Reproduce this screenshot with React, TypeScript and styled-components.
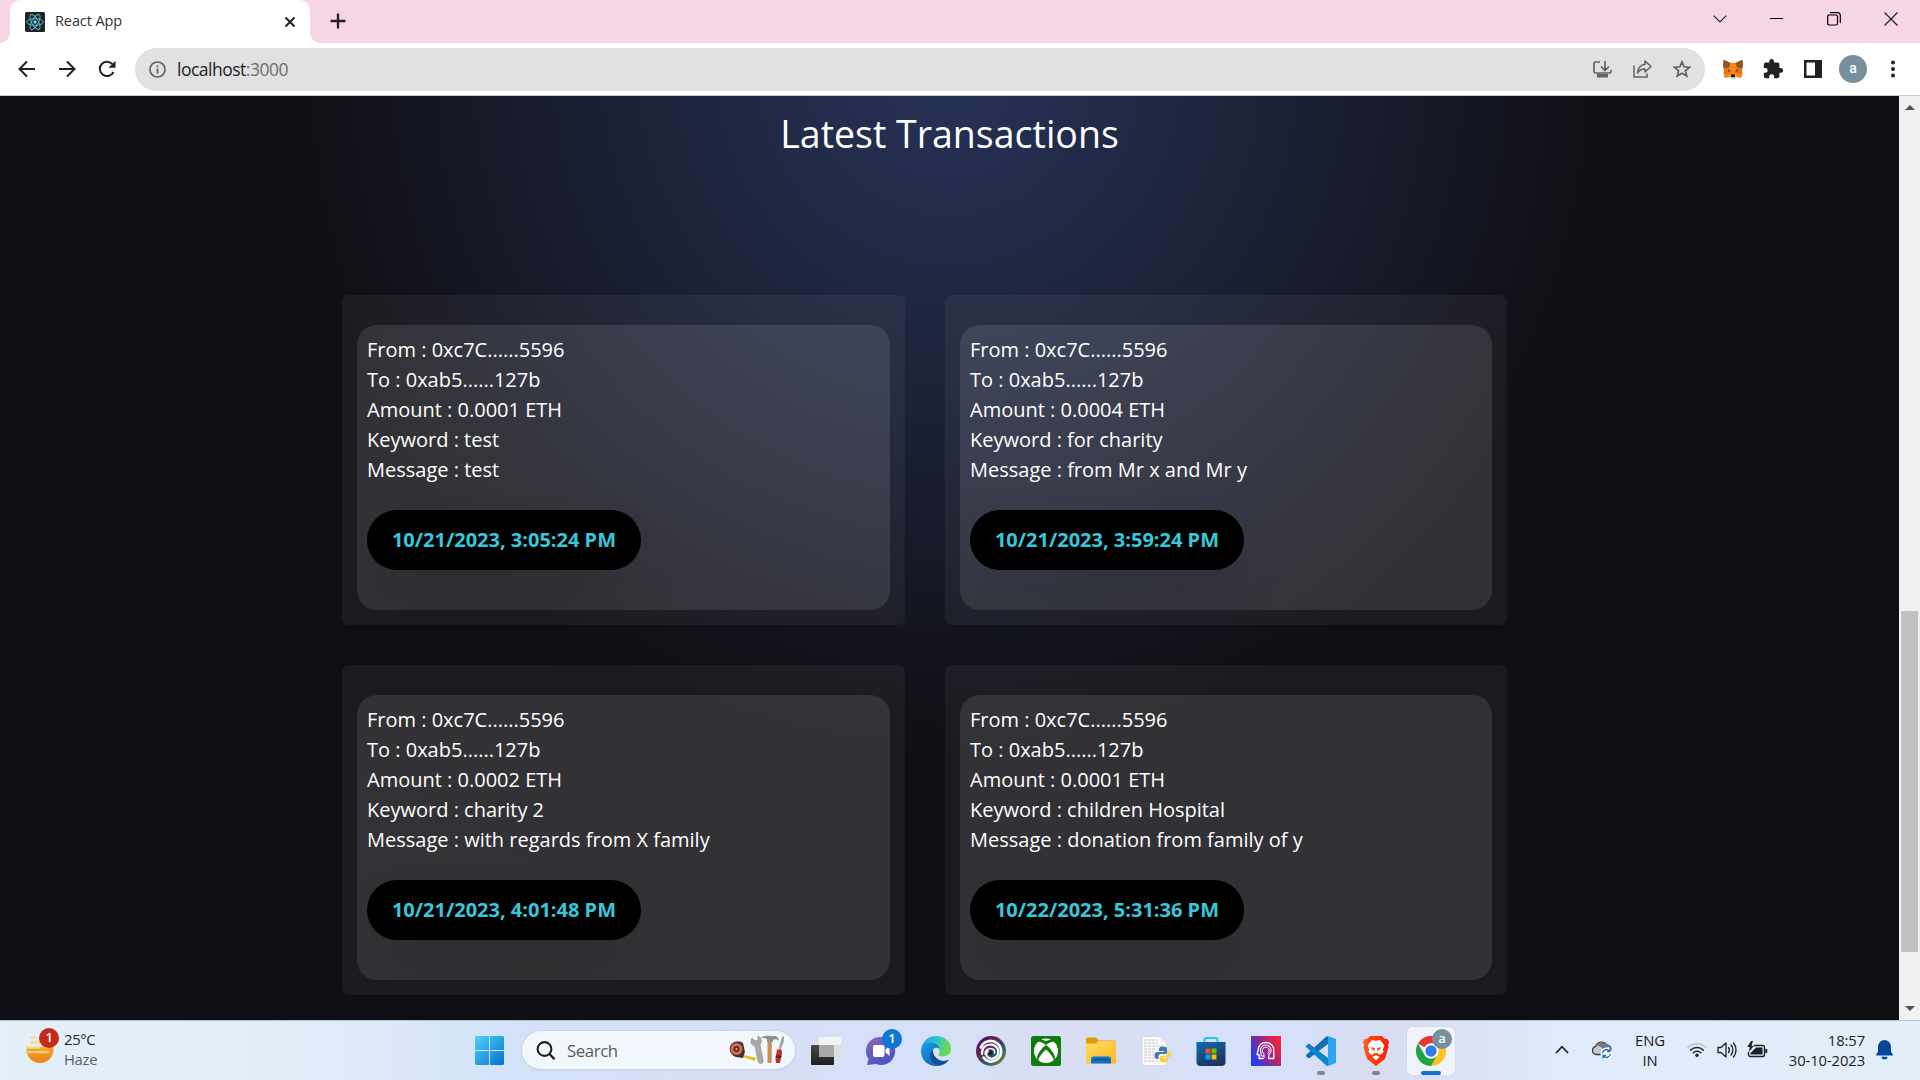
import React from "react";
import styled, { createGlobalStyle } from "styled-components";

const GlobalStyle = createGlobalStyle`
  * { box-sizing: border-box; }
  html, body { margin: 0; padding: 0; overflow: hidden; }
  p, h1 { margin: 0; }
  svg { display: block; flex: none; }
`;

const uiFont = `"Open Sans", "Noto Sans", sans-serif`;

const Screen = styled.div`
  width: 1920px;
  height: 1080px;
  display: flex;
  flex-direction: column;
  overflow: hidden;
  font-family: ${uiFont};
`;

/* ---------- browser chrome ---------- */

const TabStrip = styled.header`
  height: 43px;
  flex: none;
  display: flex;
  background: #f6d5e4;
  padding-left: 10px;
`;

const Tab = styled.div`
  position: relative;
  width: 300px;
  height: 43px;
  display: flex;
  align-items: center;
  padding: 0 14px 0 15px;
  background: #fff;
  border-radius: 10px 10px 0 0;

  &::before,
  &::after {
    content: "";
    position: absolute;
    bottom: 0;
    width: 10px;
    height: 10px;
  }
  &::before {
    left: -10px;
    background: radial-gradient(circle at 0 0, transparent 9.5px, #fff 10px);
  }
  &::after {
    right: -10px;
    background: radial-gradient(circle at 100% 0, transparent 9.5px, #fff 10px);
  }
`;

const TabTitle = styled.span`
  flex: 1;
  padding: 0 0 2px 10px;
  font-size: 14.5px;
  letter-spacing: -0.1px;
  line-height: 20px;
  color: #303236;
`;

const NewTab = styled.div`
  display: flex;
  align-items: center;
  padding: 0 0 2px 20px;
`;

const WindowControls = styled.div`
  margin-left: auto;
  display: flex;
  height: 37px;
  padding-right: 1px;
`;

const ControlSlot = styled.div<{ $w: number }>`
  width: ${(p) => p.$w}px;
  display: flex;
  align-items: center;
  justify-content: center;
`;

const Toolbar = styled.nav`
  height: 53px;
  flex: none;
  display: flex;
  align-items: center;
  background: #fff;
  border-bottom: 1px solid #c9cacc;
  padding: 0 13px 0 7px;
`;

const ToolSlot = styled.div<{ $w?: number }>`
  width: ${(p) => p.$w ?? 40}px;
  height: 40px;
  flex: none;
  display: flex;
  align-items: center;
  justify-content: center;
`;

const Omnibox = styled.div`
  width: 1570px;
  height: 43px;
  flex: none;
  display: flex;
  align-items: center;
  margin: 0 8px 0 8px;
  padding: 0 3px 0 14px;
  border-radius: 22px;
  background: #e1e1e1;
`;

const Url = styled.span`
  flex: 1;
  padding-left: 11px;
  font-size: 17.5px;
  letter-spacing: -0.5px;
  line-height: 24px;
  color: #202124;

  span {
    color: #6b6e72;
  }
`;

const Avatar = styled.div`
  width: 28px;
  height: 28px;
  border-radius: 50%;
  background: #78909c;
  color: #fff;
  font: 500 14px/27px Roboto, sans-serif;
  text-align: center;
`;

/* ---------- page ---------- */

const Viewport = styled.div`
  height: 924px;
  flex: none;
  display: flex;
  background: #0f0e13;
`;

const Page = styled.main`
  flex: 1;
  display: flex;
  flex-direction: column;
  align-items: center;
  padding-top: 10px;
  background-color: #0f0e13;
  background-image: radial-gradient(at 0% 100%, hsla(253, 16%, 7%, 1) 0, transparent 50%),
    radial-gradient(at 50% 0%, hsla(225, 39%, 25%, 1) 0, transparent 50%);
  background-size: 100% 980px;
  background-position: 0 -30px;
  background-repeat: no-repeat;
`;

const Heading = styled.h1`
  height: 56px;
  font-size: 37.5px;
  line-height: 56px;
  font-weight: 400;
  color: #fff;
`;

const CardGrid = styled.section`
  display: grid;
  grid-template-columns: 563px 562px;
  gap: 40px;
  margin: 133px 50px 0 0;
`;

const Card = styled.article`
  height: 330px;
  padding: 30px 15px 15px;
  border-radius: 7px;
  background: rgba(255, 255, 255, 0.05);
`;

const Glass = styled.div`
  height: 285px;
  padding: 10px;
  border-radius: 20px;
  background: rgba(255, 255, 255, 0.1);
  overflow: hidden;
`;

const Line = styled.p`
  font-size: 20px;
  line-height: 30px;
  color: #fff;
  white-space: nowrap;
`;

const Stamp = styled.div`
  width: 274px;
  height: 60px;
  margin-top: 25px;
  border-radius: 30px;
  background: #000;
  box-shadow: 0 31px 62px -15px rgba(0, 0, 0, 0.2);
  color: #37c7da;
  font-size: 20px;
  font-weight: 700;
  line-height: 60px;
  text-align: center;
  white-space: nowrap;
`;

const Scrollbar = styled.div`
  width: 21px;
  display: flex;
  flex-direction: column;
  align-items: center;
  background: #f1f1f1;
  padding: 9px 0 9px;
`;

const Thumb = styled.div`
  width: 17px;
  height: 341px;
  margin-top: 501px;
  margin-bottom: auto;
  background: #c1c1c1;
`;

/* ---------- taskbar ---------- */

const Taskbar = styled.footer`
  height: 60px;
  flex: none;
  display: flex;
  align-items: center;
  border-top: 1px solid #b9c0cc;
  background: linear-gradient(
    90deg,
    #e4eff8 0,
    #e0edf9 300px,
    #d3e2f9 520px,
    #d7def5 760px,
    #d5e1f9 900px,
    #d9def2 1080px,
    #d5e1fa 1250px,
    #d9ddf1 1400px,
    #dfeafa 1560px,
    #e2eef9 1920px
  );
`;

const Weather = styled.div`
  position: relative;
  width: 462px;
  height: 59px;
  padding: 8px 0 0 64px;
  font-size: 14.8px;
  line-height: 20px;
  letter-spacing: -0.3px;
  color: #23262a;

  p + p {
    color: #5b6068;
  }
  > svg {
    position: absolute;
    left: 24px;
    top: 14px;
  }
`;

const Badge = styled.span<{ $x: number; $y: number; $c: string; $s?: number }>`
  position: absolute;
  left: ${(p) => p.$x}px;
  top: ${(p) => p.$y}px;
  width: ${(p) => p.$s ?? 20}px;
  height: ${(p) => p.$s ?? 20}px;
  border-radius: 50%;
  background: ${(p) => p.$c};
  color: #fff;
  font: 600 13px/19px "Open Sans", sans-serif;
  text-align: center;
`;

const AppSlot = styled.div<{ $w?: number }>`
  position: relative;
  width: ${(p) => p.$w ?? 55}px;
  height: 59px;
  flex: none;
  display: flex;
  align-items: center;
  justify-content: center;
`;

const ActiveTile = styled.div`
  width: 48px;
  height: 48px;
  display: flex;
  align-items: center;
  justify-content: center;
  border-radius: 5px;
  background: rgba(255, 255, 255, 0.6);
  box-shadow: 0 0 1px rgba(90, 100, 130, 0.4);
`;

const Indicator = styled.i<{ $active?: boolean }>`
  position: absolute;
  bottom: 5px;
  left: 50%;
  width: ${(p) => (p.$active ? 20 : 8)}px;
  height: 4px;
  transform: translateX(-50%);
  border-radius: 2px;
  background: ${(p) => (p.$active ? "#0a74d0" : "#83868e")};
`;

const SearchBox = styled.div`
  width: 273px;
  height: 38px;
  flex: none;
  display: flex;
  align-items: center;
  margin: 0 3px 1px 5px;
  padding: 0 10px 0 14px;
  border-radius: 20px;
  background: #f2f6fd;
  box-shadow: 0 0 0 1px #cbd3e6, 0 1px 1px #9ba6ba;
  font-size: 16.8px;
  letter-spacing: -0.4px;
  color: #555a61;

  span {
    flex: 1;
    padding-left: 12px;
  }
`;

const Tray = styled.div`
  margin-left: auto;
  display: flex;
  align-items: center;
  height: 59px;
  padding: 0 17px 2px 0;
  font-size: 14.8px;
  line-height: 20px;
  letter-spacing: -0.1px;
  color: #1d2025;
`;

const TrayText = styled.div<{ $w: number; $align: string }>`
  width: ${(p) => p.$w}px;
  text-align: ${(p) => p.$align};
  white-space: nowrap;
`;

/* ---------- icons ---------- */

const ReactLogo = () => (
  <svg width="20" height="20" viewBox="0 0 20 20">
    <rect width="20" height="20" rx="1.5" fill="#222" />
    <g fill="none" stroke="#55c3de" strokeWidth="0.9">
      <ellipse cx="10" cy="10" rx="8.4" ry="3.3" />
      <ellipse cx="10" cy="10" rx="8.4" ry="3.3" transform="rotate(60 10 10)" />
      <ellipse cx="10" cy="10" rx="8.4" ry="3.3" transform="rotate(120 10 10)" />
    </g>
    <circle cx="10" cy="10" r="1.7" fill="#61dafb" />
  </svg>
);

const Stroke = ({ d, w, h = w, c = "#202124", sw = 2, cap = "butt" }: { d: string; w: number; h?: number; c?: string; sw?: number; cap?: "butt" | "round" }) => (
  <svg width={w} height={h} viewBox={`0 0 ${w} ${h}`} fill="none" stroke={c} strokeWidth={sw} strokeLinecap={cap} strokeLinejoin={cap === "round" ? "round" : "miter"}>
    <path d={d} />
  </svg>
);

const Fox = () => (
  <svg width="20" height="20" viewBox="0 0 20 20">
    <path d="M.6.8 7.6 4h4.8l7-3.2L20 8l-1 4 .6 3-1.4 4-4.4-1-2 1.6H8.200L6.200 18l-4.400 1L.4 15l.6-3-1-4z" fill="#f6851b" />
    <path d="M.6.8 7.600 4 6 8.500 1 9.200 0 6zM19.400.8 12.400 4 14 8.500l5 .7 1-3.200z" fill="#8d5528" />
    <path d="M1 10l5-1.500 2 4L6.500 15 1 14.500zM19 10l-5-1.500-2 4 1.500 2.500 5.500-.500z" fill="#e8740f" />
    <path d="M4.700 10.800l2.800 1.300-1.900.7zM15.300 10.800l-2.800 1.300 1.900.7z" fill="#233447" />
    <path d="M6 16.500h8l-2.200 3H8.200z" fill="#d7c1b3" />
    <path d="M8.300 15.600h3.400l.4 2.400H7.900z" fill="#161616" />
  </svg>
);

const Puzzle = () => (
  <svg width="22" height="22" viewBox="0 0 24 24" fill="#202124">
    <path d="M20.500 11H19V7a2 2 0 0 0-2-2h-4V3.500a2.500 2.500 0 0 0-5 0V5H4a2 2 0 0 0-2 2v3.800h1.500a2.700 2.700 0 0 1 0 5.400H2V20a2 2 0 0 0 2 2h3.800v-1.500a2.700 2.700 0 0 1 5.400 0V22H17a2 2 0 0 0 2-2v-4h1.500a2.500 2.500 0 0 0 0-5z" />
  </svg>
);

const WeatherIcon = () => (
  <svg width="32" height="32" viewBox="0 0 32 32">
    <defs>
      <linearGradient id="sun" x1="0" y1="0" x2="0" y2="1">
        <stop offset="0" stopColor="#fbc02d" />
        <stop offset="1" stopColor="#f07f13" />
      </linearGradient>
    </defs>
    <circle cx="16" cy="14.500" r="13.500" fill="url(#sun)" />
    <path d="M0 0h18v12H0z" fill="#e4eff8" />
    <g stroke="#f6dc8b" strokeWidth="2.600" strokeLinecap="round">
      <path d="M7.500 2.500h4M7.500 7.500h13M2.500 12.500h12" />
      <path d="M3 17h21" stroke="#e8cf84" />
      <path d="M19 12.500h5" stroke="#f3b43a" />
    </g>
  </svg>
);

const StartLogo = () => (
  <svg width="29" height="29" viewBox="0 0 29 29">
    <defs>
      <linearGradient id="win" x1="0" y1="0" x2="1" y2="1">
        <stop offset="0" stopColor="#4fd2fb" />
        <stop offset="1" stopColor="#0570cf" />
      </linearGradient>
    </defs>
    <path d="M1 0h13v14H0V1zM15 0h13l1 1v13H15zM0 15h14v14H1l-1-1zM15 15h14v13l-1 1H15z" fill="url(#win)" />
  </svg>
);

const Tools = () => (
  <svg width="56" height="30" viewBox="0 0 56 30">
    <path d="M15 20l12 3-1 3-12-4z" fill="#e3c11c" />
    <path d="M1 12C2 7 9 5 14 8l2 9-2 6-7-1c-5-2-7-6-6-10z" fill="#3b3333" />
    <circle cx="7.500" cy="14" r="6" fill="#e8633f" />
    <circle cx="7.500" cy="14" r="3" fill="#3b3333" />
    <circle cx="7.500" cy="14" r="1.200" fill="#d99" />
    <path d="M23 3l3 3 3-1V1c4 2 4 6 2 9l3 15c1 4-4 5-5 1L26 11c-4-1-5-4-3-8z" fill="#a9aaa8" stroke="#858684" strokeWidth=".6" />
    <rect x="38.500" y="6" width="4.200" height="22" rx="1.500" fill="#c99052" />
    <path d="M32 3c3-3 8-2 11-2h2c3 0 5 2 5 5-2-2-4-2-6-1v2h-6V4c-2-1-4-1-6-1z" fill="#8f9191" />
    <path d="M53 2l2-1v5l-3.500 9-2-1z" fill="#a3a3a3" />
    <path d="M48 14.500h4.500l.5 4-2 9.500h-4l-.5-4z" fill="#c62b24" />
    <path d="M47 20l5.500 1-.5 2-5.500-.5z" fill="#403036" />
  </svg>
);

const TaskView = () => (
  <svg width="30" height="28" viewBox="0 0 30 28">
    <defs>
      <linearGradient id="tv" x1="0" y1="0" x2="0" y2="1">
        <stop offset="0" stopColor="#484848" />
        <stop offset="1" stopColor="#1e1e1e" />
      </linearGradient>
    </defs>
    <rect y="8" width="23" height="20" rx="1" fill="url(#tv)" />
    <rect x="8" y="0" width="22" height="20" rx="1" fill="#f3f3f2" />
    <path d="M8 8h15v12H8z" fill="#a8a9a8" />
    <path d="M23 8h7v12h-7z" fill="#dcdddd" />
  </svg>
);

const Chat = () => (
  <svg width="30" height="30" viewBox="0 0 30 30">
    <defs>
      <linearGradient id="chat" x1="0" y1="0" x2=".5" y2="1">
        <stop offset="0" stopColor="#8e65b8" />
        <stop offset="1" stopColor="#4c55c5" />
      </linearGradient>
    </defs>
    <path d="M15 1a14 14 0 1 1-5 27L1 29l1.500-6A14 14 0 0 1 15 1z" fill="url(#chat)" />
    <rect x="7" y="9" width="11.500" height="12" rx="2" fill="#fff" />
    <path d="M19.500 13.500l4-3.500v10l-4-3.500z" fill="#fff" />
  </svg>
);

const Edge = () => (
  <svg width="30" height="30" viewBox="0 0 30 30">
    <defs>
      <linearGradient id="e1" x1="0" y1="0" x2="1" y2=".3">
        <stop offset="0" stopColor="#1b9de2" />
        <stop offset=".5" stopColor="#2cc3d3" />
        <stop offset="1" stopColor="#6ddc4a" />
      </linearGradient>
      <linearGradient id="e2" x1="0" y1="0" x2="1" y2="1">
        <stop offset="0" stopColor="#1a9be6" />
        <stop offset="1" stopColor="#0c5ba8" />
      </linearGradient>
    </defs>
    <path d="M.5 12C2 4.500 8 0 15 0c9 0 15 6 15 12.500 0 5-4 8-8 8-3 0-5-1-4.500-2 2-2 1.500-7-4.500-8.500C8 9 3 10 .5 12z" fill="url(#e1)" />
    <path d="M0 15c0-5 4.500-8.500 9.500-8.500 4.500 0 8.500 2.500 9 6-2-1.500-5-1-6.500 1-2 3-1 8 3 11 4 2.500 9 2 12.500-.5C25 28 20.500 30 15 30 6.500 30 0 23.500 0 15z" fill="url(#e2)" />
    <path d="M12 13.500c-4 3-4 10 1 14 4 3 11 1 15-4-4 2-8.500 2-12-1-3-2.500-4.500-6-4-9z" fill="#104f96" />
  </svg>
);

const Ubisoft = () => (
  <svg width="30" height="30" viewBox="0 0 30 30">
    <defs>
      <linearGradient id="ub" x1="0" y1="0" x2="1" y2="1">
        <stop offset="0" stopColor="#2a1e8e" />
        <stop offset=".35" stopColor="#6b1d52" />
        <stop offset=".65" stopColor="#1c6470" />
        <stop offset="1" stopColor="#a88324" />
      </linearGradient>
    </defs>
    <circle cx="15" cy="15" r="15" fill="url(#ub)" />
    <g fill="none" stroke="#fff" strokeLinecap="round">
      <path d="M4.800 11.500C7.500 4.500 16 3 21.500 7.500c5.500 5 4.500 13-1 16.500-5 3-10.500 1.500-13-2.500" strokeWidth="2.600" />
      <path d="M6 18c-.5-6 3.500-9.500 8.500-9.500 5.500 0 9 5 7.500 9.500-1.500 4.500-6.500 6-10 3.500-2.500-2-2.500-5 0-6.500" strokeWidth="2.200" />
      <path d="M9 18c0-3.500 2.500-5.500 5.500-5.500s4.500 2 4 4.500" strokeWidth="1.600" />
    </g>
    <circle cx="14.500" cy="17" r="2.300" fill="#10242c" />
  </svg>
);

const Xbox = () => (
  <svg width="30" height="30" viewBox="0 0 30 30">
    <rect width="30" height="30" rx="2.500" fill="#107c10" />
    <circle cx="15" cy="15" r="12" fill="#fff" />
    <path d="M6 6c3-1 6 .6 9 3 3-2.400 6-4 9-3-2-2.500-5.500-4-9-4s-7 1.500-9 4z" fill="#107c10" />
    <path d="M9.800 3.700C12 3.500 13.700 4.500 15 5.300c1.300-.8 3-1.800 5.200-1.600A12 12 0 0 0 9.800 3.700z" fill="#fff" />
    <path d="M15 9C9.500 13 5.500 19 6 24l1 1.200C7.600 21 11.500 16.500 15 13.500c3.500 3 7.400 7.500 8 11.700L24 24c.5-5-3.500-11-9-15z" fill="#107c10" />
  </svg>
);

const Explorer = () => (
  <svg width="30" height="28" viewBox="0 0 30 28">
    <defs>
      <linearGradient id="fold" x1="0" y1="0" x2="1" y2="1">
        <stop offset="0" stopColor="#ffdc6b" />
        <stop offset="1" stopColor="#f9b91c" />
      </linearGradient>
    </defs>
    <path d="M0 2a1.500 1.500 0 0 1 1.500-1.500H10l3 3H28.500A1.500 1.500 0 0 1 30 5v4H0z" fill="#dd9a0c" />
    <path d="M0 6.500h10l2.500-2.500H29a1 1 0 0 1 1 1v21.500H0z" fill="url(#fold)" />
    <path d="M5 26.500V22a2.500 2.500 0 0 1 2.500-2.500h15A2.500 2.500 0 0 1 25 22v4.500z" fill="#1370c4" />
    <path d="M8 22.700h14" stroke="#0c4c91" strokeWidth="1.200" />
  </svg>
);

const PythonFile = () => (
  <svg width="30" height="30" viewBox="0 0 30 30">
    <path d="M1 .5h18.500l6 6V29.500H1z" fill="#fafafa" stroke="#d5d5d8" strokeWidth=".8" />
    <path d="M19.500.5v6h6" fill="#e8e8ea" />
    <path d="M3 4h14M3 7h14M3 10h19M3 13h12M3 16h10M3 19h10M3 22h12M3 25h14" stroke="#c2c2c6" strokeWidth="1" strokeDasharray="3 1" />
    <path d="M22 10.500c-3 0-4 1-4 2.500V15h5v1h-6.500c-2 0-3 1.500-3 3.500s1 3.500 2.500 3.500h1.500v-2.500c0-1.500 1-2.500 2.500-2.500h4c1.500 0 2-1 2-2V13c0-1.500-1-2.500-4-2.500z" fill="#3d79ab" />
    <path d="M23 26.500c3 0 4-1 4-2.500v-2h-5v-1h6c1.500 0 2.300-1 2.300-3 0-2-1-2.700-2.300-2.700H26.500v2c0 1.500-1 2.500-2.500 2.500h-3.500c-1.500 0-2 1-2 2V24c0 1.500 1.500 2.500 4.500 2.500z" fill="#fdcf3f" />
  </svg>
);

const Store = () => (
  <svg width="30" height="30" viewBox="0 0 30 30">
    <defs>
      <linearGradient id="st" x1="0" y1="0" x2=".5" y2="1">
        <stop offset="0" stopColor="#0f6cb6" />
        <stop offset="1" stopColor="#1d355d" />
      </linearGradient>
    </defs>
    <path d="M8.500 6V3.500a1.500 1.500 0 0 1 1.500-1.500h10a1.500 1.500 0 0 1 1.500 1.500V6" fill="none" stroke="#2fc0f0" strokeWidth="2" />
    <path d="M.5 6h29v20a4 4 0 0 1-4 4h-21a4 4 0 0 1-4-4z" fill="url(#st)" />
    <path d="M9.500 12.500h5v5h-5z" fill="#f25022" />
    <path d="M15.500 12.500h5v5h-5z" fill="#7fba00" />
    <path d="M9.500 18.500h5v5h-5z" fill="#00a4ef" />
    <path d="M15.500 18.500h5v5h-5z" fill="#ffb900" />
  </svg>
);

const Persona = () => (
  <svg width="30" height="30" viewBox="0 0 30 30">
    <defs>
      <linearGradient id="pe" x1="0" y1=".7" x2="1" y2=".2">
        <stop offset="0" stopColor="#1e3df0" />
        <stop offset=".55" stopColor="#a4257c" />
        <stop offset="1" stopColor="#fb2631" />
      </linearGradient>
    </defs>
    <rect width="30" height="30" fill="url(#pe)" />
    <g fill="none" stroke="#fff" strokeWidth="1.300" strokeLinejoin="round">
      <path d="M12.500 22.500H8l.3-3.500-2.300-.5 1.200-4.500C7.200 9.500 10.500 6.500 14.800 6.500c4.700 0 8 3.600 8 7.800V22.500h-5.500" />
      <path d="M12.800 20H10.200v-2.500c-.6-1-.8-2-.8-3.200a5.300 5.300 0 0 1 10.600 0c0 2-.8 3.400-2.200 4.400V22.500" strokeWidth="1.100" />
      <path d="M13 22v-4.300a3.500 3.500 0 1 1 3.400 0" strokeWidth="1" />
    </g>
  </svg>
);

const VSCode = () => (
  <svg width="30" height="30" viewBox="0 0 30 30">
    <path d="M22 0l8 3v24l-8 3z" fill="#2aa5ee" />
    <path d="M22 0v8L4 21.800c-.8.600-1.500.500-2.200 0L.3 20.500c-.5-.5-.5-1.200 0-1.700L20 .8z" fill="#0f6fb8" />
    <path d="M22 30v-8L4 8.200c-.8-.600-1.500-.5-2.200 0L.3 9.500c-.5.5-.5 1.200 0 1.700L20 29.200z" fill="#0a84cf" />
  </svg>
);

const Brave = () => (
  <svg width="26" height="30" viewBox="0 0 26 30">
    <defs>
      <linearGradient id="br" x1="0" y1="0" x2="1" y2="0">
        <stop offset="0" stopColor="#ff5a1f" />
        <stop offset="1" stopColor="#fb1c02" />
      </linearGradient>
    </defs>
    <path d="M7 0h12l3 3 2-.2L26 6l-1 3 .5 2-3.500 12-9 7-9-7L.5 11 1 9 0 6l2-3.200L4 3z" fill="url(#br)" />
    <path d="M9 4l4 .8L17 4l4.500 5.500-1.700 4 .7 2.500-3 3-3-1.500.3-2.500 3.200-2.500-3.500-.5-1.500.5-1.500-.5-3.500.5 3.200 2.500.3 2.500-3 1.500-3-3 .7-2.500-1.700-4z" fill="#fff" />
    <path d="M9.500 21l3.500-2 3.500 2-3.500 3.500z" fill="#fff" />
    <path d="M12 11h2l.8 5-1.800 1.500L11.200 16z" fill="#fff" />
    <path d="M6.500 11l4.500 1-.5 1.200zM19.500 11L15 12l.5 1.200z" fill="#fb3b10" />
  </svg>
);

const Chrome = () => (
  <svg width="30" height="30" viewBox="0 0 30 30">
    <path d="M2 7.500A15 15 0 0 1 28 7.500H15a7.500 7.500 0 0 0-6.500 3.800z" fill="#e5392d" />
    <path d="M28 7.500A15 15 0 0 1 15 30l6.500-11.200A7.500 7.500 0 0 0 15 7.500z" fill="#fcc31e" />
    <path d="M2 7.500A15 15 0 0 0 15 30l6.500-11.200a7.500 7.500 0 0 1-13 0z" fill="#1ea446" />
    <circle cx="15" cy="15" r="7.500" fill="#fff" />
    <circle cx="15" cy="15" r="5.700" fill="#2f7bea" />
  </svg>
);

const Cloud = () => (
  <svg width="22" height="20" viewBox="0 0 22 20">
    <path d="M5 14.500a4.200 4.200 0 0 1-.3-8.200A6 6 0 0 1 15.500 5a4.700 4.700 0 0 1 4.600 5.500l-1 4z" fill="#c8c9cb" stroke="#37393d" strokeWidth="1.300" />
    <path d="M5 6c3-1 5 1 7 3l7-2.500C17 4 16 5 15.500 5 13 1 7 1 5 6z" fill="#77797d" />
    <circle cx="15.500" cy="13.500" r="6" fill="#fff" />
    <path d="M11.500 13a4 4 0 0 1 7-2M19.500 14a4 4 0 0 1-7 2M19 8.500v3h-3M12 18.500v-3h3" fill="none" stroke="#1573c6" strokeWidth="1.400" />
  </svg>
);

const Wifi = () => (
  <svg width="20" height="16" viewBox="0 0 20 16" fill="none" strokeWidth="1.400" strokeLinecap="round">
    <path d="M.8 5.500a13 13 0 0 1 18.400 0" stroke="#b9c2cb" />
    <path d="M3.500 8.200a9.200 9.200 0 0 1 13 0M6.200 10.800a5.400 5.400 0 0 1 7.600 0" stroke="#1d2025" />
    <circle cx="10" cy="13.300" r="1.700" fill="#1d2025" />
  </svg>
);

const Volume = () => (
  <svg width="20" height="18" viewBox="0 0 20 18" fill="none" stroke="#1d2025" strokeWidth="1.300" strokeLinecap="round" strokeLinejoin="round">
    <path d="M1 6.500h3L9 2v14l-5-4.500H1z" />
    <path d="M11.500 6.500a4 4 0 0 1 0 5M14 4a7.500 7.500 0 0 1 0 10M16.500 2a11 11 0 0 1 0 14" />
  </svg>
);

const Battery = () => (
  <svg width="21" height="17" viewBox="0 0 21 17">
    <path d="M7 4.500h8.500a2 2 0 0 1 2 2v7a2 2 0 0 1-2 2H3.500a2 2 0 0 1-2-2V11" fill="none" stroke="#1d2025" strokeWidth="1.400" />
    <path d="M9 6.500h6.500v7h-12V12z" fill="#1d2025" />
    <path d="M18.300 8h1.500l.5.800v2.500l-.5.700h-1.500z" fill="#1d2025" />
    <path d="M4 0L.3 6h2.500l-1 5L7 4.700H4.500L6 0z" fill="#1d2025" />
  </svg>
);

const Bell = () => (
  <svg width="17" height="20" viewBox="0 0 17 20" fill="#0a4697">
    <path d="M8.500 0a6.500 6.500 0 0 1 6.500 6.500v5l1.800 3v1H.2v-1l1.800-3v-5A6.500 6.500 0 0 1 8.500 0zM5.500 16.700h6a3 2.600 0 0 1-6 0z" />
  </svg>
);

/* ---------- data ---------- */

type Tx = { amount: string; keyword: string; message: string; time: string };

const transactions: Tx[] = [
  { amount: "0.0001", keyword: "test", message: "test", time: "10/21/2023, 3:05:24 PM" },
  { amount: "0.0004", keyword: "for charity", message: "from Mr x and Mr y", time: "10/21/2023, 3:59:24 PM" },
  { amount: "0.0002", keyword: "charity 2", message: "with regards from X family", time: "10/21/2023, 4:01:48 PM" },
  { amount: "0.0001", keyword: "children Hospital", message: "donation from family of y", time: "10/22/2023, 5:31:36 PM" },
];

const TransactionCard = ({ tx }: { tx: Tx }) => (
  <Card>
    <Glass>
      <Line>From : 0xc7C......5596</Line>
      <Line>To : 0xab5......127b</Line>
      <Line>Amount : {tx.amount} ETH</Line>
      <Line>Keyword : {tx.keyword}</Line>
      <Line>Message : {tx.message}</Line>
      <Stamp>{tx.time}</Stamp>
    </Glass>
  </Card>
);

export default function App() {
  return (
    <Screen>
      <GlobalStyle />
      <TabStrip>
        <Tab>
          <ReactLogo />
          <TabTitle>React App</TabTitle>
          <Stroke w={12} d="M1.500 1.500l9 9M10.500 1.500l-9 9" sw={2} />
        </Tab>
        <NewTab>
          <Stroke w={16} d="M8 .5v15M.5 8h15" sw={2.300} />
        </NewTab>
        <WindowControls>
          <ControlSlot $w={57}>
            <Stroke w={14} h={8} d="M.7 .7L7 7l6.300-6.300" sw={1.100} />
          </ControlSlot>
          <ControlSlot $w={57}>
            <Stroke w={13} h={3} d="M0 1.500h13" sw={1} c="#000" />
          </ControlSlot>
          <ControlSlot $w={57}>
            <Stroke w={14} d="M2.500 3h6.500a1.500 1.500 0 0 1 1.500 1.500v7a1.500 1.500 0 0 1-1.500 1.500h-7A1.500 1.500 0 0 1 .7 11.500v-7A1.500 1.500 0 0 1 2.500 3zM3 .7h7.500a2.700 2.700 0 0 1 2.800 2.800V11" sw={1.200} c="#000" />
          </ControlSlot>
          <ControlSlot $w={57}>
            <Stroke w={14} d="M.5 .5l13 13M13.500 .5l-13 13" sw={1.200} />
          </ControlSlot>
        </WindowControls>
      </TabStrip>
      <Toolbar>
        <ToolSlot>
          <Stroke w={18} d="M17 9H2M9 1.500L1.500 9 9 16.500" sw={2} />
        </ToolSlot>
        <ToolSlot>
          <Stroke w={18} d="M1 9h15M9 1.500L16.500 9 9 16.500" sw={2} />
        </ToolSlot>
        <ToolSlot>
          <svg width="18" height="18" viewBox="0 0 18 18">
            <path d="M15.500 12A7.200 7.200 0 1 1 14.300 4" fill="none" stroke="#202124" strokeWidth="2" />
            <path d="M17.500 .8v7h-7z" fill="#202124" />
          </svg>
        </ToolSlot>
        <Omnibox>
          <svg width="17" height="17" viewBox="0 0 17 17">
            <circle cx="8.500" cy="8.500" r="7.500" fill="none" stroke="#5f6368" strokeWidth="1.700" />
            <path d="M7.600 7.500h1.800v5H7.600zM7.600 4.500h1.800v1.800H7.600z" fill="#5f6368" />
          </svg>
          <Url>
            localhost<span>:3000</span>
          </Url>
          <ToolSlot>
            <svg width="19" height="17" viewBox="0 0 19 17" fill="none" stroke="#5f6368" strokeWidth="1.700">
              <path d="M7 1H2.500A1.500 1.500 0 0 0 1 2.500v8A1.500 1.500 0 0 0 2.500 12h14A1.500 1.500 0 0 0 18 10.500V9M12 0v9M8 5.500l4 4 4-4" />
              <path d="M4 13h11v3.500H4z" fill="#5f6368" stroke="none" />
            </svg>
          </ToolSlot>
          <ToolSlot>
            <svg width="19" height="18" viewBox="0 0 19 18" fill="none" stroke="#5f6368" strokeWidth="1.500">
              <path d="M1 5.500V17h13v-3.500" />
              <path d="M12 1l6 5.500-6 5.500V9C8 9 6 10.500 4.500 13 5 8 7.500 5 12 4.300z" strokeLinejoin="round" />
            </svg>
          </ToolSlot>
          <ToolSlot>
            <svg width="18" height="18" viewBox="0 0 18 18" fill="none" stroke="#5f6368" strokeWidth="1.700">
              <path d="M9 1.800l2.100 5 5.400.5-4.100 3.500 1.300 5.300L9 13.300l-4.700 2.800 1.300-5.300L1.500 7.300l5.400-.5z" />
            </svg>
          </ToolSlot>
        </Omnibox>
        <ToolSlot>
          <Fox />
        </ToolSlot>
        <ToolSlot>
          <Puzzle />
        </ToolSlot>
        <ToolSlot>
          <svg width="18" height="18" viewBox="0 0 18 18">
            <path d="M0 0h18v18H0zM2.500 2.500v13h8.500v-13z" fill="#202124" fillRule="evenodd" />
          </svg>
        </ToolSlot>
        <ToolSlot $w={40}>
          <Avatar>a</Avatar>
        </ToolSlot>
        <ToolSlot $w={39}>
          <svg width="4" height="18" viewBox="0 0 4 18" fill="#202124">
            <circle cx="2" cy="2.500" r="2" />
            <circle cx="2" cy="9" r="2" />
            <circle cx="2" cy="15.500" r="2" />
          </svg>
        </ToolSlot>
      </Toolbar>

      <Viewport>
        <Page>
          <Heading>Latest Transactions</Heading>
          <CardGrid>
            {transactions.map((tx) => (
              <TransactionCard key={tx.time} tx={tx} />
            ))}
          </CardGrid>
        </Page>
        <Scrollbar>
          <svg width="10" height="5" viewBox="0 0 10 5">
            <path d="M5 0l5 5H0z" fill="#505050" />
          </svg>
          <Thumb />
          <svg width="10" height="5" viewBox="0 0 10 5">
            <path d="M5 5L0 0h10z" fill="#505050" />
          </svg>
        </Scrollbar>
      </Viewport>

      <Taskbar>
        <Weather>
          <WeatherIcon />
          <Badge $x={39} $y={7} $c="#c42b1c">
            1
          </Badge>
          <p>25°C</p>
          <p>Haze</p>
        </Weather>
        <AppSlot>
          <StartLogo />
        </AppSlot>
        <SearchBox>
          <svg width="19" height="19" viewBox="0 0 19 19" fill="none" stroke="#1f1f1f" strokeWidth="2.100" strokeLinecap="round">
            <circle cx="8.500" cy="8" r="6.900" />
            <path d="M13.500 13l4.300 4.500" strokeWidth="2.400" />
          </svg>
          <span>Search</span>
          <Tools />
        </SearchBox>
        <AppSlot>
          <TaskView />
        </AppSlot>
        <AppSlot>
          <Chat />
          <Badge $x={29} $y={8} $c="#0a78d4">
            1
          </Badge>
        </AppSlot>
        <AppSlot>
          <Edge />
        </AppSlot>
        <AppSlot>
          <Ubisoft />
        </AppSlot>
        <AppSlot>
          <Xbox />
        </AppSlot>
        <AppSlot>
          <Explorer />
        </AppSlot>
        <AppSlot>
          <PythonFile />
        </AppSlot>
        <AppSlot>
          <Store />
        </AppSlot>
        <AppSlot>
          <Persona />
        </AppSlot>
        <AppSlot>
          <VSCode />
          <Indicator />
        </AppSlot>
        <AppSlot>
          <Brave />
          <Indicator />
        </AppSlot>
        <AppSlot>
          <ActiveTile>
            <Chrome />
          </ActiveTile>
          <Badge $x={29} $y={8} $c="#78909c">
            a
          </Badge>
          <Indicator $active />
        </AppSlot>
        <Tray>
          <ControlSlot $w={30}>
            <Stroke w={14} h={9} d="M1 8l6-6.300L13 8" sw={1.800} c="#1d2025" />
          </ControlSlot>
          <ControlSlot $w={50}>
            <Cloud />
          </ControlSlot>
          <TrayText $w={46} $align="center">
            ENG
            <br />
            IN
          </TrayText>
          <ControlSlot $w={48}>
            <Wifi />
          </ControlSlot>
          <ControlSlot $w={12}>
            <Volume />
          </ControlSlot>
          <ControlSlot $w={48}>
            <Battery />
          </ControlSlot>
          <TrayText $w={84} $align="right">
            18:57
            <br />
            30-10-2023
          </TrayText>
          <ControlSlot $w={38}>
            <Bell />
          </ControlSlot>
        </Tray>
      </Taskbar>
    </Screen>
  );
}
